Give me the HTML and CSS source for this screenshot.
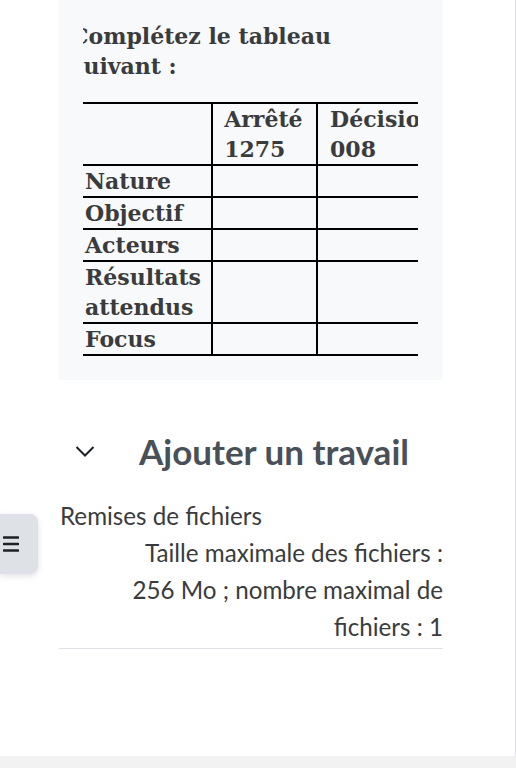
FILE: index.html
```html
<!DOCTYPE html>
<html lang="fr">
<head>
<meta charset="utf-8">
<title>Ajouter un travail</title>
<link rel="stylesheet" href="styles.css">
</head>
<body>
<div class="page">
  <div class="main">
    <div class="column">
      <div class="intro-box">
        <div class="clip">
          <h4 class="task">Complétez le tableau suivant :</h4>
          <table class="grid">
            <tr class="head">
              <th class="c1"></th>
              <th class="c2">Arrêté 1275</th>
              <th class="c3">Décision 008</th>
            </tr>
            <tr><td class="c1">Nature</td><td class="c2"></td><td class="c3"></td></tr>
            <tr><td class="c1">Objectif</td><td class="c2"></td><td class="c3"></td></tr>
            <tr><td class="c1">Acteurs</td><td class="c2"></td><td class="c3"></td></tr>
            <tr><td class="c1">Résultats attendus</td><td class="c2"></td><td class="c3"></td></tr>
            <tr><td class="c1">Focus</td><td class="c2"></td><td class="c3"></td></tr>
          </table>
        </div>
      </div>

      <div class="section-head">
        <svg class="chevron" width="20" height="12" viewBox="0 0 20 12"><path d="M1.5 2 L10 10.5 L18.5 2" fill="none" stroke="#1d2125" stroke-width="2"/></svg>
        <h3 class="section-title">Ajouter un travail</h3>
      </div>

      <div class="submission">
        <div class="sub-label">Remises de fichiers</div>
        <div class="sub-info">Taille maximale des fichiers : 256 Mo ; nombre maximal de fichiers : 1</div>
      </div>
    </div>
    <button class="drawer-toggle" aria-label="Menu">
      <svg width="16" height="20" viewBox="0 0 16 20"><path d="M1 3.5 H15 M1 10 H15 M1 16.5 H15" stroke="#1d2125" stroke-width="2.6" stroke-linecap="round"/></svg>
    </button>
  </div>
  <div class="footer"></div>
</div>
</body>
</html>
```

FILE: styles.css
```css
html, body {
  margin: 0;
  padding: 0;
  background: #ffffff;
}
.page {
  width: 516px;
  height: 768px;
  display: flex;
  flex-direction: column;
}
.main {
  position: relative;
  height: 756px;
  width: 515px;
  border-right: 1px solid #dee2e6;
  box-sizing: content-box;
}
.footer {
  height: 12px;
  background: #f2f2f2;
}
.column {
  margin-left: 59px;
  width: 384px;
  display: flex;
  flex-direction: column;
}
.intro-box {
  background: #f8f9fa;
  height: 380px;
  padding-left: 24px;
  padding-right: 25px;
  box-sizing: border-box;
}
.clip {
  overflow: hidden;
  height: 100%;
}
.task {
  margin: 0;
  padding-top: 21px;
  margin-left: -12px;
  font-family: "DejaVu Serif", serif;
  font-weight: bold;
  font-size: 22px;
  line-height: 30px;
  color: #3a3b3d;
  width: 300px;
}
.grid {
  margin-top: 21px;
  border-collapse: collapse;
  font-family: "DejaVu Serif", serif;
  font-weight: bold;
  font-size: 22px;
  line-height: 30px;
  color: #3a3b3d;
  table-layout: fixed;
  width: 336px;
}
.grid th, .grid td {
  border-top: 2px solid #000;
  border-bottom: 2px solid #000;
  padding: 0;
  text-align: left;
  vertical-align: top;
}
.grid .c1 {
  width: 125px;
  padding-left: 2px;
  border-right: 2px solid #000;
}
.grid .c2 {
  width: 91px;
  padding-left: 11px;
  border-right: 2px solid #000;
}
.grid .c3 {
  width: 88px;
  padding-left: 12px;
}
.grid .head th {
  font-weight: bold;
}
.section-head {
  display: flex;
  align-items: center;
  margin-top: 49px;
  height: 44px;
}
.chevron {
  margin-left: 16px;
  margin-top: 0;
}
.section-title {
  margin: 0 0 0 44px;
  font-family: Lato, sans-serif;
  font-weight: bold;
  font-size: 35px;
  line-height: 44px;
  color: #495057;
}
.submission {
  margin-top: 25px;
  border-bottom: 1px solid #dee2e6;
  padding-bottom: 3px;
  font-family: Lato, sans-serif;
  font-size: 24.2px;
  color: #3a3b3d;
}
.sub-label {
  line-height: 36px;
  padding-left: 1px;
}
.sub-info {
  text-align: right;
  line-height: 37px;
  padding-left: 60px;
}
.drawer-toggle {
  position: absolute;
  left: 0;
  top: 514px;
  width: 38px;
  height: 60px;
  border: none;
  padding: 0 0 0 3px;
  background: #dee2e6;
  border-radius: 0 8px 8px 0;
  box-shadow: 0 2px 6px rgba(0,0,0,0.12);
  display: flex;
  align-items: center;
  justify-content: flex-start;
}
```
